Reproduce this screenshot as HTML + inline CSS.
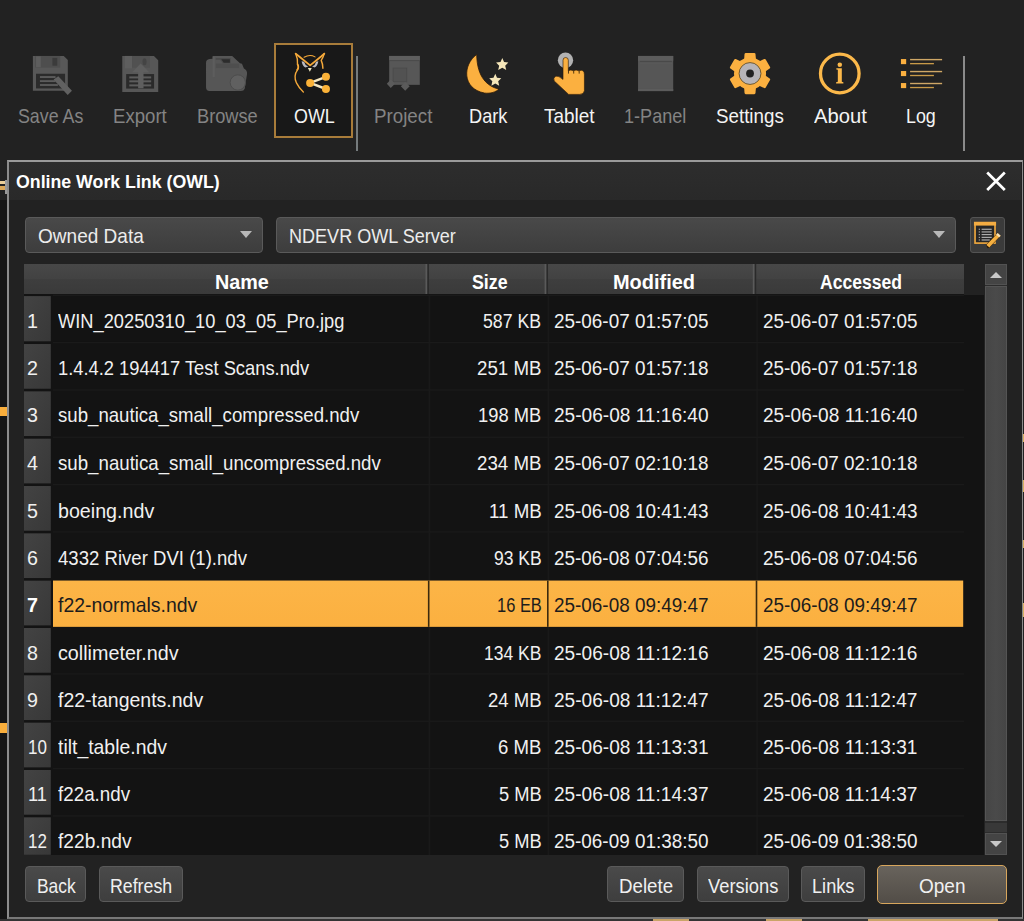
<!DOCTYPE html>
<html><head><meta charset="utf-8">
<style>
*{box-sizing:border-box;margin:0;padding:0}
html,body{width:1024px;height:921px;overflow:hidden;background:#222222;font-family:"Liberation Sans",sans-serif;}
body{position:relative}
.abs{position:absolute}
.t{position:absolute;white-space:nowrap;line-height:1;transform-origin:0 50%;display:block}
.ico{position:absolute}
.sep{position:absolute;top:56.3px;width:2px;height:94.4px;background:#828688}
#dlg{position:absolute;left:7px;top:160px;width:1015.7px;height:759.3px;border:2px solid #8c8c8c;border-top-color:#9a9a9a;border-right-width:1.6px;border-bottom-color:#787878;background:#222222}
#title{position:absolute;left:9px;top:162px;width:1012px;height:38px;background:linear-gradient(#2d2d2d,#292929)}
.combo{position:absolute;top:217px;height:36px;border:1px solid #5a5a5a;border-radius:4px;background:linear-gradient(#494949,#3d3d3d)}
.combo i{position:absolute;right:10.3px;top:13px;width:0;height:0;border-left:6.2px solid transparent;border-right:6.2px solid transparent;border-top:7px solid #b8b8b8}
#tbl{position:absolute;left:24px;top:264px;width:960px;height:591px;background:#131313}
.hd{position:absolute;top:264px;height:30px;background:linear-gradient(#484848 0%,#424242 50%,#3e3e3e 51%,#3a3a3a 100%)}
.hs{position:absolute;top:264px;height:30px;width:3px;background:linear-gradient(90deg,#585858 0,#585858 66%,#262626 67%)}
.nc{position:absolute;left:24px;width:26.8px;background:linear-gradient(135deg,#424242,#383838)}
.rs{position:absolute;left:53px;width:911px;height:1px;background:#1b1b1b}
.selrow{position:absolute;left:53px;width:910px;background:linear-gradient(#fcb547,#fbb040)}
.selsep{position:absolute;width:1.6px;background:#3b2a0e}
.btn{position:absolute;top:866.3px;height:36.1px;border:1px solid #5a5a5a;border-radius:4px;background:linear-gradient(#4a4a4a,#3e3e3e)}
</style></head><body>
<!-- left strip behind dialog -->
<div class="abs" style="left:0;top:200px;width:8px;height:721px;background:#151515"></div>
<div class="abs" style="left:0;top:181px;width:4.5px;height:3.4px;background:#ecd09a"></div>
<div class="abs" style="left:0;top:186.4px;width:4.5px;height:3.2px;background:#dca858"></div>
<div class="abs" style="left:5.2px;top:180px;width:2.8px;height:14px;background:#9a9a9a"></div>
<div class="abs" style="left:0;top:407px;width:7px;height:9px;background:#f9ae3c"></div>
<div class="abs" style="left:0;top:723px;width:7px;height:10px;background:#f9ae3c"></div>

<!-- toolbar -->
<div class="abs" style="left:274.3px;top:42.9px;width:79px;height:95px;border:2px solid #a87c3a;background:#181818"></div>
<!-- Save As -->
<svg class="ico" style="left:20px;top:45px" width="80" height="55" viewBox="0 0 1024 704">
<path d="M165 140 H560 L612 192 V585 H165 Z" fill="#585858"/>
<rect x="195" y="140" width="320" height="150" fill="#4e4e4e"/>
<rect x="205" y="145" width="60" height="140" fill="#5e5e5e"/>
<rect x="415" y="165" width="62" height="100" fill="#3b3b3b"/>
<rect x="205" y="368" width="372" height="188" fill="#2b2b2b"/>
<rect x="255" y="398" width="200" height="24" fill="#5c5c5c"/>
<rect x="255" y="450" width="200" height="24" fill="#5c5c5c"/>
<rect x="255" y="500" width="230" height="24" fill="#5c5c5c"/>
<path d="M430 440 L490 400 L665 585 L610 640 Z" fill="#616161"/>
</svg>
<!-- Export -->
<svg class="ico" style="left:100px;top:45px" width="80" height="55" viewBox="0 0 1024 704">
<path d="M285 140 H690 L745 195 V600 H285 Z" fill="#575757"/>
<rect x="320" y="140" width="90" height="160" fill="#5e5e5e"/>
<rect x="410" y="140" width="230" height="150" fill="#515151"/>
<ellipse cx="570" cy="215" rx="26" ry="45" fill="#444"/>
<rect x="335" y="372" width="357" height="186" fill="#2a2a2a"/>
<rect x="375" y="402" width="280" height="26" fill="#5c5c5c"/>
<rect x="375" y="452" width="280" height="26" fill="#5c5c5c"/>
<rect x="375" y="504" width="280" height="26" fill="#5c5c5c"/>
<path d="M520 238 L630 348 H557 V552 H488 V348 H412 Z" fill="#5f5f5f"/>
</svg>
<!-- Browse -->
<svg class="ico" style="left:190px;top:45px" width="80" height="55" viewBox="0 0 1024 704">
<path d="M205 230 Q205 185 250 180 L290 175 V140 H540 L640 232 L665 240 L690 300 Q735 320 730 370 L700 560 Q690 590 650 590 H250 Q205 585 205 540 Z" fill="#565656"/>
<path d="M330 165 H520 V232 H420 L385 190 H330 Z" fill="#4a4a4a"/>
<path d="M400 182 H510 V226 H432 Z" fill="#2c2c2c"/>
<rect x="330" y="238" width="300" height="58" fill="#4e4e4e"/>
<rect x="290" y="150" width="28" height="260" fill="#5d5d5d"/>
<circle cx="612" cy="480" r="98" fill="#606060" stroke="#4b4b4b" stroke-width="12"/>
</svg>
<!-- OWL -->
<svg class="ico" style="left:284px;top:44px" width="60" height="56" viewBox="0 0 987 921">
<g fill="none" stroke="#f5a93a" stroke-linecap="round" stroke-linejoin="round">
<path d="M192 158 L250 205 L430 352 L610 205 L663 158" stroke-width="30"/>
<path d="M330 218 Q425 165 510 212" stroke-width="18"/>
<path d="M192 158 Q232 250 222 330 Q250 380 225 420 Q150 520 205 640 Q250 730 318 790" stroke-width="22"/>
<path d="M222 330 Q255 385 215 425" stroke-width="26"/>
<path d="M663 158 Q640 230 612 270 Q640 330 640 400" stroke-width="24"/>
</g>
<path d="M290 285 Q300 360 350 385 L400 372 Q340 340 330 290 Z" fill="#b9b9c0"/>
<path d="M565 285 Q555 360 505 385 L462 372 Q520 340 528 290 Z" fill="#b9b9c0"/>
<path d="M393 395 L457 395 L425 458 Z" fill="#efe6c0"/>
<path d="M430 640 L690 540 M430 640 L690 740" stroke="#f5e8c4" stroke-width="40" stroke-linecap="round"/>
<circle cx="430" cy="640" r="66" fill="#fbb238"/>
<circle cx="690" cy="540" r="66" fill="#fbb238"/>
<circle cx="690" cy="740" r="66" fill="#fbb238"/>
</svg>
<!-- Project -->
<svg class="ico" style="left:363px;top:45px" width="80" height="55" viewBox="0 0 1024 704">
<rect x="335" y="140" width="392" height="370" fill="#575757"/>
<rect x="335" y="140" width="392" height="52" fill="#5e5e5e"/>
<rect x="335" y="192" width="392" height="14" fill="#4b4b4b"/>
<rect x="385" y="295" width="175" height="175" fill="#525252" stroke="#4a4a4a" stroke-width="10"/>
<path d="M355 440 L410 495 L355 550 L305 495 Z" fill="#5b5b5b"/>
<path d="M540 472 L598 528 L540 585 L484 528 Z" fill="#5b5b5b"/>
</svg>
<!-- Dark -->
<svg class="ico" style="left:447px;top:45px" width="80" height="55" viewBox="0 0 1024 704">
<path d="M380 122 C200 250 190 560 480 615 C560 625 625 600 665 565 C520 530 385 420 380 122 Z" fill="#fbb040" stroke="#2a1806" stroke-width="10"/>
<path d="M708 165 L730 218 L785 225 L745 265 L758 320 L708 292 L655 320 L668 265 L628 225 L685 218 Z" fill="#f6e7ba"/>
<path d="M618 368 L640 420 L695 427 L655 465 L668 520 L618 492 L568 520 L580 465 L540 427 L595 420 Z" fill="#f6e7ba"/>
</svg>
<!-- Tablet -->
<svg class="ico" style="left:528px;top:45px" width="80" height="55" viewBox="0 0 1024 704">
<circle cx="480" cy="195" r="98" fill="#b2b2b2"/>
<path d="M448 195 Q448 160 482 160 Q516 160 516 195 V330 Q548 312 580 330 Q615 312 650 330 Q722 305 722 380 V585 Q715 632 660 632 H520 L335 460 Q318 420 355 400 Q390 390 448 440 Z" fill="#fbb040" stroke="#2a1806" stroke-width="8"/>
<path d="M518 320 V366 M585 322 V366 M655 322 V366" stroke="#4a300c" stroke-width="12"/>
</svg>
<!-- 1-Panel -->
<svg class="ico" style="left:615px;top:45px" width="80" height="55" viewBox="0 0 1024 704">
<rect x="295" y="140" width="450" height="450" fill="#565656"/>
<rect x="295" y="140" width="450" height="62" fill="#5c5c5c"/>
<rect x="318" y="204" width="410" height="12" fill="#484848"/>
<rect x="318" y="228" width="410" height="10" fill="#5c5c5c"/>
<rect x="295" y="562" width="450" height="28" fill="#5c5c5c"/>
</svg>
<!-- Settings -->
<svg class="ico" style="left:709px;top:45px" width="80" height="55" viewBox="0 0 1024 704">
<g transform="translate(525 365)">
<g fill="#fbb040">
<circle r="205"/>
<path d="M-78 -150 L-70 -250 Q-68 -264 -55 -264 H55 Q68 -264 70 -250 L78 -150 Z" transform="rotate(0)"/><path d="M-78 -150 L-70 -250 Q-68 -264 -55 -264 H55 Q68 -264 70 -250 L78 -150 Z" transform="rotate(60)"/><path d="M-78 -150 L-70 -250 Q-68 -264 -55 -264 H55 Q68 -264 70 -250 L78 -150 Z" transform="rotate(120)"/><path d="M-78 -150 L-70 -250 Q-68 -264 -55 -264 H55 Q68 -264 70 -250 L78 -150 Z" transform="rotate(180)"/><path d="M-78 -150 L-70 -250 Q-68 -264 -55 -264 H55 Q68 -264 70 -250 L78 -150 Z" transform="rotate(240)"/><path d="M-78 -150 L-70 -250 Q-68 -264 -55 -264 H55 Q68 -264 70 -250 L78 -150 Z" transform="rotate(300)"/>
</g>
<circle r="140" fill="#b6b4b8" stroke="#5a4010" stroke-width="10"/>
<circle r="50" fill="#222"/>
</g>
</svg>
<!-- About -->
<svg class="ico" style="left:799px;top:45px" width="80" height="55" viewBox="0 0 1024 704">
<circle cx="522" cy="365" r="247" fill="none" stroke="#fbb84a" stroke-width="42"/>
<circle cx="522" cy="252" r="29" fill="#fbb84a"/>
<path d="M478 298 H548 V470 L568 478 V494 H475 V478 L497 470 V318 L478 312 Z" fill="#fbb84a"/>
</svg>
<!-- Log -->
<svg class="ico" style="left:880px;top:45px" width="80" height="55" viewBox="0 0 1024 704">
<g fill="#fbb040"><rect x="268" y="180" width="67" height="65"/><rect x="268" y="333" width="67" height="65"/><rect x="268" y="487" width="67" height="65"/></g>
<g fill="#cfa766"><rect x="385" y="178" width="410" height="18"/><rect x="385" y="331" width="410" height="18"/><rect x="385" y="484" width="410" height="18"/></g>
<g fill="#c89a48"><rect x="385" y="230" width="305" height="17"/><rect x="385" y="382" width="305" height="17"/><rect x="385" y="536" width="305" height="17"/></g>
</svg>

<span class="t" style="left:17.60px;top:104px;line-height:24px;font-size:19.8px;color:#848484;transform:scaleX(0.9000);">Save As</span>
<span class="t" style="left:112.90px;top:104px;line-height:24px;font-size:19.8px;color:#848484;transform:scaleX(0.9402);">Export</span>
<span class="t" style="left:196.50px;top:104px;line-height:24px;font-size:19.8px;color:#848484;transform:scaleX(0.9208);">Browse</span>
<span class="t" style="left:293.60px;top:104px;line-height:24px;font-size:19.8px;color:#f4f4f4;transform:scaleX(0.9048);">OWL</span>
<span class="t" style="left:373.90px;top:104px;line-height:24px;font-size:19.8px;color:#848484;transform:scaleX(0.9476);">Project</span>
<span class="t" style="left:468.80px;top:104px;line-height:24px;font-size:19.8px;color:#f4f4f4;transform:scaleX(0.9194);">Dark</span>
<span class="t" style="left:543.50px;top:104px;line-height:24px;font-size:19.8px;color:#f4f4f4;transform:scaleX(0.9561);">Tablet</span>
<span class="t" style="left:624.00px;top:104px;line-height:24px;font-size:19.8px;color:#848484;transform:scaleX(0.9141);">1-Panel</span>
<span class="t" style="left:716.20px;top:104px;line-height:24px;font-size:19.8px;color:#f4f4f4;transform:scaleX(0.9479);">Settings</span>
<span class="t" style="left:813.50px;top:104px;line-height:24px;font-size:19.8px;color:#f4f4f4;transform:scaleX(1.0207);">About</span>
<span class="t" style="left:906.20px;top:104px;line-height:24px;font-size:19.8px;color:#f4f4f4;transform:scaleX(0.9026);">Log</span>
<div class="sep" style="left:356.2px;background:#757b7d"></div>
<div class="sep" style="left:962.6px;background:#8a8a8a"></div>

<!-- dialog -->
<div id="dlg"></div>
<div id="title"></div>
<span class="t" style="left:15.90px;top:170px;line-height:23px;font-size:18.3px;font-weight:bold;color:#ffffff;transform:scaleX(0.9704);">Online Work Link (OWL)</span>
<svg class="abs" style="left:985px;top:170px" width="22" height="22" viewBox="0 0 22 22"><path d="M2.2 2.5 L19.8 20 M19.8 2.5 L2.2 20" stroke="#fff" stroke-width="2.7" fill="none"/></svg>

<div class="combo" style="left:25px;width:238px"><i></i></div>
<div class="combo" style="left:276px;width:680px"><i></i></div>
<div class="combo" id="editbtn" style="left:969.5px;width:35.7px;border-radius:3px;border-color:#545454;background:#3b3b3b"></div>
<!-- Edit icon -->
<svg class="ico" style="left:960px;top:210px" width="56" height="50" viewBox="0 0 1024 914">
<rect x="275" y="235" width="365" height="370" fill="#262626" stroke="#f0a83e" stroke-width="30"/>
<rect x="255" y="215" width="405" height="70" fill="#f3ac42"/>
<g fill="#b8b8b8"><rect x="395" y="342" width="185" height="20"/><rect x="395" y="391" width="185" height="20"/><rect x="395" y="440" width="185" height="20"/><rect x="395" y="490" width="185" height="20"/><rect x="395" y="538" width="150" height="20"/>
<rect x="343" y="342" width="20" height="20"/><rect x="343" y="391" width="20" height="20"/><rect x="343" y="440" width="20" height="20"/><rect x="343" y="490" width="20" height="20"/><rect x="343" y="538" width="20" height="20"/></g>
<path d="M690 420 L745 470 L535 690 L475 640 Z" fill="#f5b040" stroke="#2a1806" stroke-width="10"/>
<path d="M690 420 L745 470 L715 500 L660 450 Z" fill="#f7e2b8"/>
<path d="M475 640 L535 690 L505 700 Z" fill="#2a1806"/>
</svg>

<span class="t" style="left:37.50px;top:224px;line-height:24px;font-size:20.3px;color:#ececec;transform:scaleX(0.9383);">Owned Data</span>
<span class="t" style="left:289.00px;top:224px;line-height:24px;font-size:20.3px;color:#ececec;transform:scaleX(0.8901);">NDEVR OWL Server</span>

<div id="tbl"></div>
<div class="abs" style="left:964.3px;top:264px;width:20.7px;height:31px;background:#222"></div>
<div class="hd" style="left:24px;width:940.3px"></div>
<span class="t" style="left:214.90px;top:270px;line-height:24px;font-size:20.0px;font-weight:bold;color:#fff;transform:scaleX(0.9881);">Name</span>
<span class="t" style="left:471.60px;top:270px;line-height:24px;font-size:20.0px;font-weight:bold;color:#fff;transform:scaleX(0.8875);">Size</span>
<span class="t" style="left:612.60px;top:270px;line-height:24px;font-size:20.0px;font-weight:bold;color:#fff;transform:scaleX(0.9976);">Modified</span>
<span class="t" style="left:820.00px;top:270px;line-height:24px;font-size:20.0px;font-weight:bold;color:#fff;transform:scaleX(0.8779);">Accessed</span>
<svg class="abs" style="left:0;top:0" width="1024" height="921" viewBox="0 0 1024 921"><defs><linearGradient id="ncg" x1="0" y1="0" x2="1" y2="1"><stop offset="0" stop-color="#434343"/><stop offset="1" stop-color="#383838"/></linearGradient><linearGradient id="selg" x1="0" y1="0" x2="0" y2="1"><stop offset="0" stop-color="#fcb547"/><stop offset="1" stop-color="#fbb040"/></linearGradient></defs>
<rect x="428.6" y="296" width="1.6" height="559" fill="#191919"/>
<rect x="547.6" y="296" width="1.6" height="559" fill="#191919"/>
<rect x="756.3" y="296" width="1.6" height="559" fill="#191919"/>
<rect x="24" y="296.10" width="26.8" height="45.20" fill="url(#ncg)"/>
<rect x="53" y="294.60" width="911" height="1.4" fill="#1a1a1a"/>
<rect x="24" y="344.03" width="26.8" height="44.70" fill="url(#ncg)"/>
<rect x="53" y="341.93" width="911" height="1.4" fill="#1a1a1a"/>
<rect x="24" y="391.36" width="26.8" height="44.70" fill="url(#ncg)"/>
<rect x="53" y="389.26" width="911" height="1.4" fill="#1a1a1a"/>
<rect x="24" y="438.69" width="26.8" height="44.70" fill="url(#ncg)"/>
<rect x="53" y="436.59" width="911" height="1.4" fill="#1a1a1a"/>
<rect x="24" y="486.02" width="26.8" height="44.70" fill="url(#ncg)"/>
<rect x="53" y="483.92" width="911" height="1.4" fill="#1a1a1a"/>
<rect x="24" y="533.35" width="26.8" height="44.70" fill="url(#ncg)"/>
<rect x="53" y="531.25" width="911" height="1.4" fill="#1a1a1a"/>
<rect x="24" y="580.68" width="26.8" height="44.70" fill="url(#ncg)"/>
<rect x="53" y="580.55" width="910.2" height="46.3" fill="url(#selg)"/>
<rect x="427.9" y="580.55" width="1.6" height="46.3" fill="#3b2a0e"/>
<rect x="547.0" y="580.55" width="1.6" height="46.3" fill="#3b2a0e"/>
<rect x="755.7" y="580.55" width="1.6" height="46.3" fill="#3b2a0e"/>
<rect x="24" y="628.01" width="26.8" height="44.70" fill="url(#ncg)"/>
<rect x="24" y="675.34" width="26.8" height="44.70" fill="url(#ncg)"/>
<rect x="53" y="673.24" width="911" height="1.4" fill="#1a1a1a"/>
<rect x="24" y="722.67" width="26.8" height="44.70" fill="url(#ncg)"/>
<rect x="53" y="720.57" width="911" height="1.4" fill="#1a1a1a"/>
<rect x="24" y="770.00" width="26.8" height="44.70" fill="url(#ncg)"/>
<rect x="53" y="767.90" width="911" height="1.4" fill="#1a1a1a"/>
<rect x="24" y="817.33" width="26.8" height="37.47" fill="url(#ncg)"/>
<rect x="53" y="815.23" width="911" height="1.4" fill="#1a1a1a"/>
<rect x="425.5" y="264" width="1.9" height="30" fill="#5a5a5a"/><rect x="427.4" y="264" width="1.5" height="30" fill="#2a2a2a"/>
<rect x="544.6" y="264" width="1.9" height="30" fill="#5a5a5a"/><rect x="546.5" y="264" width="1.5" height="30" fill="#2a2a2a"/>
<rect x="752.8" y="264" width="1.9" height="30" fill="#5a5a5a"/><rect x="754.6999999999999" y="264" width="1.5" height="30" fill="#2a2a2a"/>
</svg>
<span class="t" style="left:27.30px;top:309px;line-height:24px;font-size:20.3px;color:#f0f0f0;transform:scaleX(0.9700);">1</span>
<span class="t" style="left:58.30px;top:309px;line-height:24px;font-size:20.3px;color:#f0f0f0;transform:scaleX(0.9007);">WIN_20250310_10_03_05_Pro.jpg</span>
<span class="t" style="left:483.40px;top:309px;line-height:24px;font-size:20.3px;color:#f0f0f0;transform:scaleX(0.8726);">587 KB</span>
<span class="t" style="left:554.30px;top:309px;line-height:24px;font-size:20.3px;color:#f0f0f0;transform:scaleX(0.9325);">25-06-07 01:57:05</span>
<span class="t" style="left:763.00px;top:309px;line-height:24px;font-size:20.3px;color:#f0f0f0;transform:scaleX(0.9319);">25-06-07 01:57:05</span>
<span class="t" style="left:27.30px;top:356px;line-height:24px;font-size:20.3px;color:#f0f0f0;transform:scaleX(0.9700);">2</span>
<span class="t" style="left:58.30px;top:356px;line-height:24px;font-size:20.3px;color:#f0f0f0;transform:scaleX(0.9030);">1.4.4.2 194417 Test Scans.ndv</span>
<span class="t" style="left:477.00px;top:356px;line-height:24px;font-size:20.3px;color:#f0f0f0;transform:scaleX(0.9216);">251 MB</span>
<span class="t" style="left:554.30px;top:356px;line-height:24px;font-size:20.3px;color:#f0f0f0;transform:scaleX(0.9325);">25-06-07 01:57:18</span>
<span class="t" style="left:763.00px;top:356px;line-height:24px;font-size:20.3px;color:#f0f0f0;transform:scaleX(0.9319);">25-06-07 01:57:18</span>
<span class="t" style="left:27.30px;top:403px;line-height:24px;font-size:20.3px;color:#f0f0f0;transform:scaleX(0.9700);">3</span>
<span class="t" style="left:58.30px;top:403px;line-height:24px;font-size:20.3px;color:#f0f0f0;transform:scaleX(0.9182);">sub_nautica_small_compressed.ndv</span>
<span class="t" style="left:478.20px;top:403px;line-height:24px;font-size:20.3px;color:#f0f0f0;transform:scaleX(0.9045);">198 MB</span>
<span class="t" style="left:554.30px;top:403px;line-height:24px;font-size:20.3px;color:#f0f0f0;transform:scaleX(0.9408);">25-06-08 11:16:40</span>
<span class="t" style="left:763.00px;top:403px;line-height:24px;font-size:20.3px;color:#f0f0f0;transform:scaleX(0.9402);">25-06-08 11:16:40</span>
<span class="t" style="left:27.30px;top:451px;line-height:24px;font-size:20.3px;color:#f0f0f0;transform:scaleX(0.9700);">4</span>
<span class="t" style="left:58.30px;top:451px;line-height:24px;font-size:20.3px;color:#f0f0f0;transform:scaleX(0.9207);">sub_nautica_small_uncompressed.ndv</span>
<span class="t" style="left:477.00px;top:451px;line-height:24px;font-size:20.3px;color:#f0f0f0;transform:scaleX(0.9216);">234 MB</span>
<span class="t" style="left:554.30px;top:451px;line-height:24px;font-size:20.3px;color:#f0f0f0;transform:scaleX(0.9325);">25-06-07 02:10:18</span>
<span class="t" style="left:763.00px;top:451px;line-height:24px;font-size:20.3px;color:#f0f0f0;transform:scaleX(0.9319);">25-06-07 02:10:18</span>
<span class="t" style="left:27.30px;top:499px;line-height:24px;font-size:20.3px;color:#f0f0f0;transform:scaleX(0.9700);">5</span>
<span class="t" style="left:58.30px;top:499px;line-height:24px;font-size:20.3px;color:#f0f0f0;transform:scaleX(0.9696);">boeing.ndv</span>
<span class="t" style="left:488.70px;top:499px;line-height:24px;font-size:20.3px;color:#f0f0f0;transform:scaleX(0.9240);">11 MB</span>
<span class="t" style="left:554.30px;top:499px;line-height:24px;font-size:20.3px;color:#f0f0f0;transform:scaleX(0.9325);">25-06-08 10:41:43</span>
<span class="t" style="left:763.00px;top:499px;line-height:24px;font-size:20.3px;color:#f0f0f0;transform:scaleX(0.9319);">25-06-08 10:41:43</span>
<span class="t" style="left:27.30px;top:546px;line-height:24px;font-size:20.3px;color:#f0f0f0;transform:scaleX(0.9700);">6</span>
<span class="t" style="left:58.30px;top:546px;line-height:24px;font-size:20.3px;color:#f0f0f0;transform:scaleX(0.9160);">4332 River DVI (1).ndv</span>
<span class="t" style="left:493.70px;top:546px;line-height:24px;font-size:20.3px;color:#f0f0f0;transform:scaleX(0.8641);">93 KB</span>
<span class="t" style="left:554.30px;top:546px;line-height:24px;font-size:20.3px;color:#f0f0f0;transform:scaleX(0.9325);">25-06-08 07:04:56</span>
<span class="t" style="left:763.00px;top:546px;line-height:24px;font-size:20.3px;color:#f0f0f0;transform:scaleX(0.9319);">25-06-08 07:04:56</span>
<span class="t" style="left:27.30px;top:593px;line-height:24px;font-size:20.3px;font-weight:bold;color:#ffffff;transform:scaleX(0.9700);">7</span>
<span class="t" style="left:58.30px;top:593px;line-height:24px;font-size:20.3px;color:#1c1c1c;transform:scaleX(0.9577);">f22-normals.ndv</span>
<span class="t" style="left:496.60px;top:593px;line-height:24px;font-size:20.3px;color:#1c1c1c;transform:scaleX(0.8117);">16 EB</span>
<span class="t" style="left:554.30px;top:593px;line-height:24px;font-size:20.3px;color:#1c1c1c;transform:scaleX(0.9325);">25-06-08 09:49:47</span>
<span class="t" style="left:763.00px;top:593px;line-height:24px;font-size:20.3px;color:#1c1c1c;transform:scaleX(0.9319);">25-06-08 09:49:47</span>
<span class="t" style="left:27.30px;top:641px;line-height:24px;font-size:20.3px;color:#f0f0f0;transform:scaleX(0.9700);">8</span>
<span class="t" style="left:58.30px;top:641px;line-height:24px;font-size:20.3px;color:#f0f0f0;transform:scaleX(0.9731);">collimeter.ndv</span>
<span class="t" style="left:484.00px;top:641px;line-height:24px;font-size:20.3px;color:#f0f0f0;transform:scaleX(0.8636);">134 KB</span>
<span class="t" style="left:554.30px;top:641px;line-height:24px;font-size:20.3px;color:#f0f0f0;transform:scaleX(0.9408);">25-06-08 11:12:16</span>
<span class="t" style="left:763.00px;top:641px;line-height:24px;font-size:20.3px;color:#f0f0f0;transform:scaleX(0.9402);">25-06-08 11:12:16</span>
<span class="t" style="left:27.30px;top:688px;line-height:24px;font-size:20.3px;color:#f0f0f0;transform:scaleX(0.9700);">9</span>
<span class="t" style="left:58.30px;top:688px;line-height:24px;font-size:20.3px;color:#f0f0f0;transform:scaleX(0.9608);">f22-tangents.ndv</span>
<span class="t" style="left:487.80px;top:688px;line-height:24px;font-size:20.3px;color:#f0f0f0;transform:scaleX(0.9153);">24 MB</span>
<span class="t" style="left:554.30px;top:688px;line-height:24px;font-size:20.3px;color:#f0f0f0;transform:scaleX(0.9408);">25-06-08 11:12:47</span>
<span class="t" style="left:763.00px;top:688px;line-height:24px;font-size:20.3px;color:#f0f0f0;transform:scaleX(0.9402);">25-06-08 11:12:47</span>
<span class="t" style="left:28.40px;top:735px;line-height:24px;font-size:20.3px;color:#f0f0f0;transform:scaleX(0.8369);">10</span>
<span class="t" style="left:58.30px;top:735px;line-height:24px;font-size:20.3px;color:#f0f0f0;transform:scaleX(0.9563);">tilt_table.ndv</span>
<span class="t" style="left:498.10px;top:735px;line-height:24px;font-size:20.3px;color:#f0f0f0;transform:scaleX(0.9156);">6 MB</span>
<span class="t" style="left:554.30px;top:735px;line-height:24px;font-size:20.3px;color:#f0f0f0;transform:scaleX(0.9408);">25-06-08 11:13:31</span>
<span class="t" style="left:763.00px;top:735px;line-height:24px;font-size:20.3px;color:#f0f0f0;transform:scaleX(0.9402);">25-06-08 11:13:31</span>
<span class="t" style="left:28.40px;top:782px;line-height:24px;font-size:20.3px;color:#f0f0f0;transform:scaleX(0.8974);">11</span>
<span class="t" style="left:58.30px;top:782px;line-height:24px;font-size:20.3px;color:#f0f0f0;transform:scaleX(0.9268);">f22a.ndv</span>
<span class="t" style="left:498.70px;top:782px;line-height:24px;font-size:20.3px;color:#f0f0f0;transform:scaleX(0.9029);">5 MB</span>
<span class="t" style="left:554.30px;top:782px;line-height:24px;font-size:20.3px;color:#f0f0f0;transform:scaleX(0.9408);">25-06-08 11:14:37</span>
<span class="t" style="left:763.00px;top:782px;line-height:24px;font-size:20.3px;color:#f0f0f0;transform:scaleX(0.9402);">25-06-08 11:14:37</span>
<span class="t" style="left:28.40px;top:829px;line-height:24px;font-size:20.3px;color:#f0f0f0;transform:scaleX(0.8369);">12</span>
<span class="t" style="left:58.30px;top:829px;line-height:24px;font-size:20.3px;color:#f0f0f0;transform:scaleX(0.9461);">f22b.ndv</span>
<span class="t" style="left:498.70px;top:829px;line-height:24px;font-size:20.3px;color:#f0f0f0;transform:scaleX(0.9029);">5 MB</span>
<span class="t" style="left:554.30px;top:829px;line-height:24px;font-size:20.3px;color:#f0f0f0;transform:scaleX(0.9325);">25-06-09 01:38:50</span>
<span class="t" style="left:763.00px;top:829px;line-height:24px;font-size:20.3px;color:#f0f0f0;transform:scaleX(0.9319);">25-06-09 01:38:50</span>

<!-- scrollbar -->
<div class="abs" style="left:985px;top:264px;width:21.5px;height:591px;background:#2c2c2c"></div>
<div class="abs" style="left:985px;top:264px;width:21.5px;height:20.5px;background:#444;border:1px solid #525252"></div>
<div class="abs" style="left:989.7px;top:271.5px;width:0;height:0;border-left:6px solid transparent;border-right:6px solid transparent;border-bottom:6.3px solid #c8c8c8"></div>
<div class="abs" style="left:985px;top:286.3px;width:21.5px;height:535px;background:linear-gradient(90deg,#464646,#4a4a4a 50%,#454545);border:1px solid #545454"></div>
<div class="abs" style="left:985px;top:823px;width:21.5px;height:9px;background:#383838"></div>
<div class="abs" style="left:985px;top:833px;width:21.5px;height:21.5px;background:#444;border:1px solid #525252"></div>
<div class="abs" style="left:989.7px;top:840.5px;width:0;height:0;border-left:6px solid transparent;border-right:6px solid transparent;border-top:6.3px solid #c8c8c8"></div>

<!-- buttons -->
<div class="btn" style="left:25.3px;width:60.3px"></div>
<div class="btn" style="left:99px;width:84.4px"></div>
<div class="btn" style="left:607.3px;width:76.6px"></div>
<div class="btn" style="left:696.5px;width:92px"></div>
<div class="btn" style="left:800.8px;width:64px"></div>
<div class="btn" id="open" style="left:876.6px;width:130.4px;top:864.5px;height:39.3px;border:1.7px solid #d8a65c;border-radius:5px;background:linear-gradient(#68635c,#524d47)"></div>
<span class="t" style="left:36.50px;top:874px;line-height:24px;font-size:20.3px;color:#f0f0f0;transform:scaleX(0.8590);">Back</span>
<span class="t" style="left:110.30px;top:874px;line-height:24px;font-size:20.3px;color:#f0f0f0;transform:scaleX(0.8748);">Refresh</span>
<span class="t" style="left:618.80px;top:874px;line-height:24px;font-size:20.3px;color:#f0f0f0;transform:scaleX(0.9239);">Delete</span>
<span class="t" style="left:707.80px;top:874px;line-height:24px;font-size:20.3px;color:#f0f0f0;transform:scaleX(0.9043);">Versions</span>
<span class="t" style="left:812.00px;top:874px;line-height:24px;font-size:20.3px;color:#f0f0f0;transform:scaleX(0.8966);">Links</span>
<span class="t" style="left:919.00px;top:874px;line-height:24px;font-size:20.3px;color:#f0f0f0;transform:scaleX(0.9379);">Open</span>

<div class="abs" style="left:1022.8px;top:434px;width:1.2px;height:8px;background:#d8b060"></div>
<div class="abs" style="left:1022.8px;top:480px;width:1.2px;height:12px;background:#d8b060"></div>
<div class="abs" style="left:1022.8px;top:540px;width:1.2px;height:8px;background:#d8b060"></div>
<div class="abs" style="left:1022.8px;top:603px;width:1.2px;height:14px;background:#d8b060"></div>
<!-- bottom strip -->
<div class="abs" style="left:0;top:919.3px;width:1024px;height:2px;background:#333"></div>
<div class="abs" style="left:653px;top:919.3px;width:36px;height:2px;background:#caa467"></div>
<div class="abs" style="left:766px;top:919.3px;width:36px;height:2px;background:#caa467"></div>
<div class="abs" style="left:868px;top:919.3px;width:130px;height:2px;background:#caa467"></div>
</body></html>
